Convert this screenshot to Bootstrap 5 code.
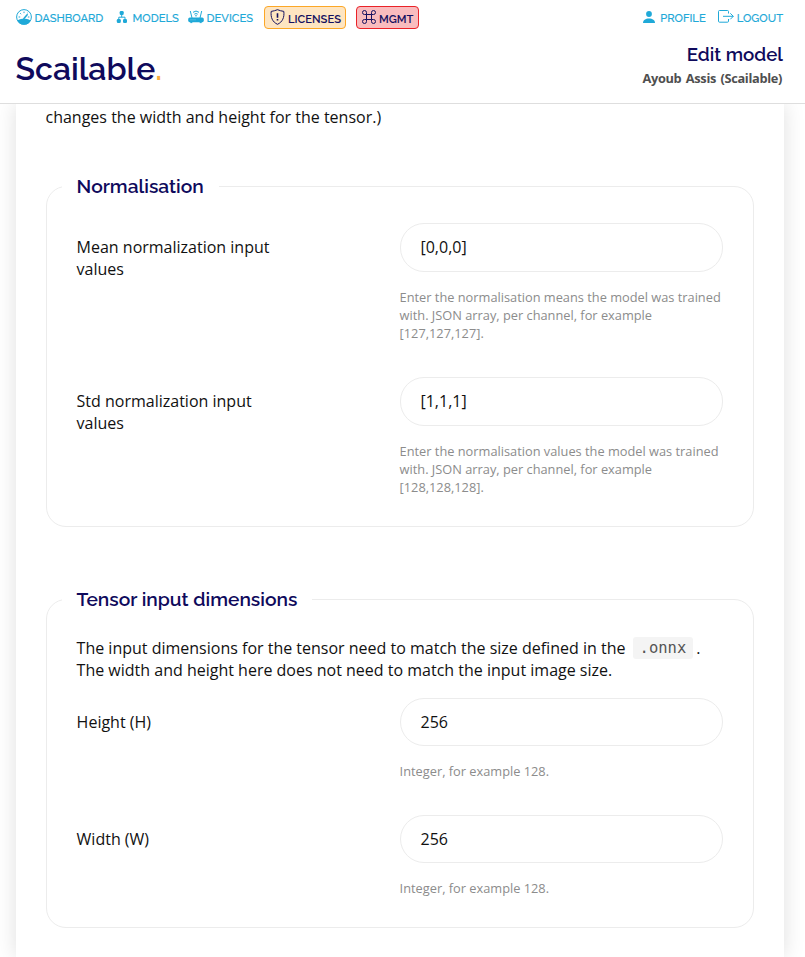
<!DOCTYPE html>
<html lang="en">
<head>
<meta charset="utf-8">
<meta name="viewport" content="width=device-width, initial-scale=1">
<title>Edit model - Scailable</title>
<link href="https://cdn.jsdelivr.net/npm/bootstrap@5.3.0/dist/css/bootstrap.min.css" rel="stylesheet">
<style>
body{font-family:"Open Sans",sans-serif;font-size:16px;line-height:22px;color:#111;background:#fff;height:957px;overflow:hidden}
.brandfont{font-family:Raleway,Lato,"Open Sans",sans-serif}
.topbar{height:104px;border-bottom:1px solid #dedede;background:#fff;z-index:2}
.topnav{height:35px;padding:0 22px 0 15.500px}
.navitem{color:#1fa9d8;font-size:11.2px;font-weight:500;line-height:16px;text-decoration:none;white-space:nowrap;display:flex;align-items:center;height:35px;gap:4px;-webkit-text-stroke:.15px currentColor}
.navitem svg{flex:none;margin-top:-2px}
.navitem span{margin-top:1px}
.w-dash{width:100.500px;gap:3px}.w-models{width:72px;gap:4.500px}.w-dev{width:76px;gap:2.500px}
.w-prof{margin-right:12px;gap:5px}.w-logout{gap:3px}
.pill{height:23px;border-radius:4px;color:#14105f;font-weight:600;padding:0 0 0 5px;gap:3px;-webkit-text-stroke:0}
.pill span{margin-top:3px}
.pill svg{margin-top:-1px}
.pill-lic{width:82px;border:1px solid #fca726;background:#fee5c1;margin-right:10px}
.pill-mgmt{width:63px;border:1px solid #ea2227;background:#f9bcbe}
.brandname{font-size:32px;line-height:40px;font-weight:600;color:#0f0a5c;padding-top:6px;margin-left:-.5px}
.brandname i{color:#f9ae3c;font-style:normal}
.pagename{font-size:18.7px;line-height:22px;font-weight:600;color:#0f0a5c}
.username{font-size:12.8px;line-height:18px;font-weight:700;color:#4f4f4f;letter-spacing:-.33px;word-spacing:1.5px;padding:4px 1px 0 0}
.namebox{padding-right:6px}
.sheet{margin:0 21px 0 16px;height:853px;padding:2px 30px 0;background:#fff;box-shadow:0 0 20px rgba(0,0,0,.13)}
.sheet>p{margin-left:-.5px}
.group{border:1px solid #ececec;border-radius:20px;padding:0 30px 0 29.600px}
.group legend{float:none;width:auto;margin:0 0 0 -15px;padding:0 15px;font-size:19.2px;line-height:28px;font-weight:600;color:#0f0a5c}
.g-norm{margin-top:44px;height:355px}
.g-norm .field:first-of-type{margin-top:23px}
.g-dims{margin-top:58px;height:343px}
.g-dims legend{padding-top:1px;line-height:27px}
.g-dims p{padding-top:24px;margin-bottom:17px}
.field{display:grid;grid-template-columns:323.400px 323px}
.field+.field{margin-top:35px}
.field label{padding:13px 100px 0 0}
.pillinput{height:49px;border:1px solid #ececec;border-radius:24px;padding:0 20px 1px 19.500px;font-size:16px;color:#111}
.short .pillinput{height:48px}
.hint{font-size:12.8px;line-height:18px;color:#8c8c8c;margin-top:16px;margin-left:-.4px}
.filecode{display:inline-block;height:22px;line-height:23px;vertical-align:top;font-family:"DejaVu Sans Mono",monospace;font-size:15.500px;color:#555;background:#f4f4f4;border-radius:3px;padding:0 7px;margin:0 3px 0 3px}
</style>
</head>
<body>
<header class="topbar position-relative">
  <nav class="topnav brandfont d-flex align-items-center">
    <a class="navitem w-dash" href="#"><svg width="16" height="16" viewBox="0 0 16 16" fill="none" stroke="#1fa9d8"><circle cx="8" cy="8" r="7.4" stroke-width="1"/><path d="M1.300 11.400C4 9.900 6 9.800 8 9.800s4 .1 6.700 1.600C13.400 14.300 11 15.600 8 15.600S2.600 14.300 1.300 11.400z" fill="#1fa9d8" stroke="none"/><path d="M7.500 10 11.600 5.200" stroke-width="1.500"/><path d="M8 2.600v1.500M4.200 4.200l1 1M2.600 8h1.600M11.800 8h1.600M11.200 4.400l.6-.6" stroke-width="1"/></svg><span>DASHBOARD</span></a>
    <a class="navitem w-models" href="#"><svg width="12" height="12" viewBox="0 0 12 12" fill="#1fa9d8"><rect x="3.700" y="0" width="4" height="4" rx="1.300"/><rect x=".8" y="8" width="4" height="4" rx="1.300"/><rect x="7" y="8" width="4" height="4" rx="1.300"/><path d="M5.700 3v3.200M2.800 8.500V6.200H9v2.300" fill="none" stroke="#1fa9d8"/></svg><span>MODELS</span></a>
    <a class="navitem w-dev" href="#"><svg width="16" height="14" viewBox="0 0 16 14" fill="none" stroke="#1fa9d8"><rect x=".2" y="7.500" width="15.600" height="4.700" rx="1.600" fill="#1fa9d8" stroke="none"/><path d="M2.300 1l1.700 7M13.700 1l-1.700 7M5 2.300Q8-.2 11 2.300M6.300 4.200q1.700-1.400 3.400 0M2.300 12.600h2M11.700 12.600h2"/><circle cx="8" cy="5.800" r=".8" fill="#1fa9d8" stroke="none"/><path d="M2.500 9.800h1M4.500 9.800h1M6.500 9.800h1" stroke="#fff" stroke-width=".7" opacity=".6"/></svg><span>DEVICES</span></a>
    <a class="navitem pill pill-lic" href="#"><svg width="15" height="16" viewBox="0 0 15 16" fill="none" stroke="#14105f"><path d="M7.500.7C5.600 1.500 3.300 2.100 1.200 2.400.5 8.300 2.400 13 7.500 15.300 12.600 13 14.500 8.300 13.800 2.400 11.700 2.100 9.400 1.500 7.500.7z" stroke-width="1"/><path d="M7.500 4.200v4.600M7.500 9.900v1.600" stroke-width="1.600"/></svg><span>LICENSES</span></a>
    <a class="navitem pill pill-mgmt" href="#"><svg width="14" height="14" viewBox="0 0 14 14" fill="none" stroke="#14105f" stroke-width="1"><path d="M4.500 4.500h5v5h-5zM4.500 4.500H2.600A2 2 0 1 1 4.500 2.600zM9.500 4.500V2.600a2 2 0 1 1 1.900 1.900zM4.500 9.500v1.900a2 2 0 1 1-1.900-1.900zM9.500 9.500h1.900a2 2 0 1 1-1.900 1.900z"/></svg><span>MGMT</span></a>
    <a class="navitem w-prof ms-auto" href="#"><svg width="12" height="12" viewBox="0 0 12 12" fill="#1fa9d8"><circle cx="6" cy="3" r="2.900"/><path d="M0 12c0-3 2.500-4.600 6-4.600S12 9 12 12z"/></svg><span>PROFILE</span></a>
    <a class="navitem w-logout" href="#"><svg width="16" height="13" viewBox="0 0 16 13" fill="none" stroke="#1fa9d8"><path d="M10.500 3.500V1.500a1 1 0 0 0-1-1h-8a1 1 0 0 0-1 1v9.700a1 1 0 0 0 1 1h8a1 1 0 0 0 1-1V9M5 6.300h10.300M12.300 3.300l3 3-3 3"/></svg><span>LOGOUT</span></a>
  </nav>
  <div class="d-flex justify-content-between ps-3 pe-3 pt-2">
    <div class="brandname brandfont">Scailable<i>.</i></div>
    <div class="text-end namebox"><div class="pagename brandfont">Edit model</div><div class="username">Ayoub Assis (Scailable)</div></div>
  </div>
</header>
<main class="sheet">
  <p class="mb-0">changes the width and height for the tensor.)</p>
  <fieldset class="group g-norm">
    <legend class="brandfont">Normalisation</legend>
    <div class="field">
      <label for="mean">Mean normalization input values</label>
      <div><input id="mean" class="form-control pillinput" value="[0,0,0]"><div class="hint">Enter the normalisation means the model was trained with. JSON array, per channel, for example [127,127,127].</div></div>
    </div>
    <div class="field">
      <label for="std">Std normalization input values</label>
      <div><input id="std" class="form-control pillinput" value="[1,1,1]"><div class="hint">Enter the normalisation values the model was trained with. JSON array, per channel, for example [128,128,128].</div></div>
    </div>
  </fieldset>
  <fieldset class="group g-dims short">
    <legend class="brandfont">Tensor input dimensions</legend>
    <p>The input dimensions for the tensor need to match the size defined in the <code class="filecode">.onnx</code>. The width and height here does not need to match the input image size.</p>
    <div class="field">
      <label for="hh">Height (H)</label>
      <div><input id="hh" class="form-control pillinput" value="256"><div class="hint">Integer, for example 128.</div></div>
    </div>
    <div class="field">
      <label for="ww">Width (W)</label>
      <div><input id="ww" class="form-control pillinput" value="256"><div class="hint">Integer, for example 128.</div></div>
    </div>
  </fieldset>
</main>
<script src="https://cdn.jsdelivr.net/npm/bootstrap@5.3.0/dist/js/bootstrap.bundle.min.js"></script>
</body>
</html>
